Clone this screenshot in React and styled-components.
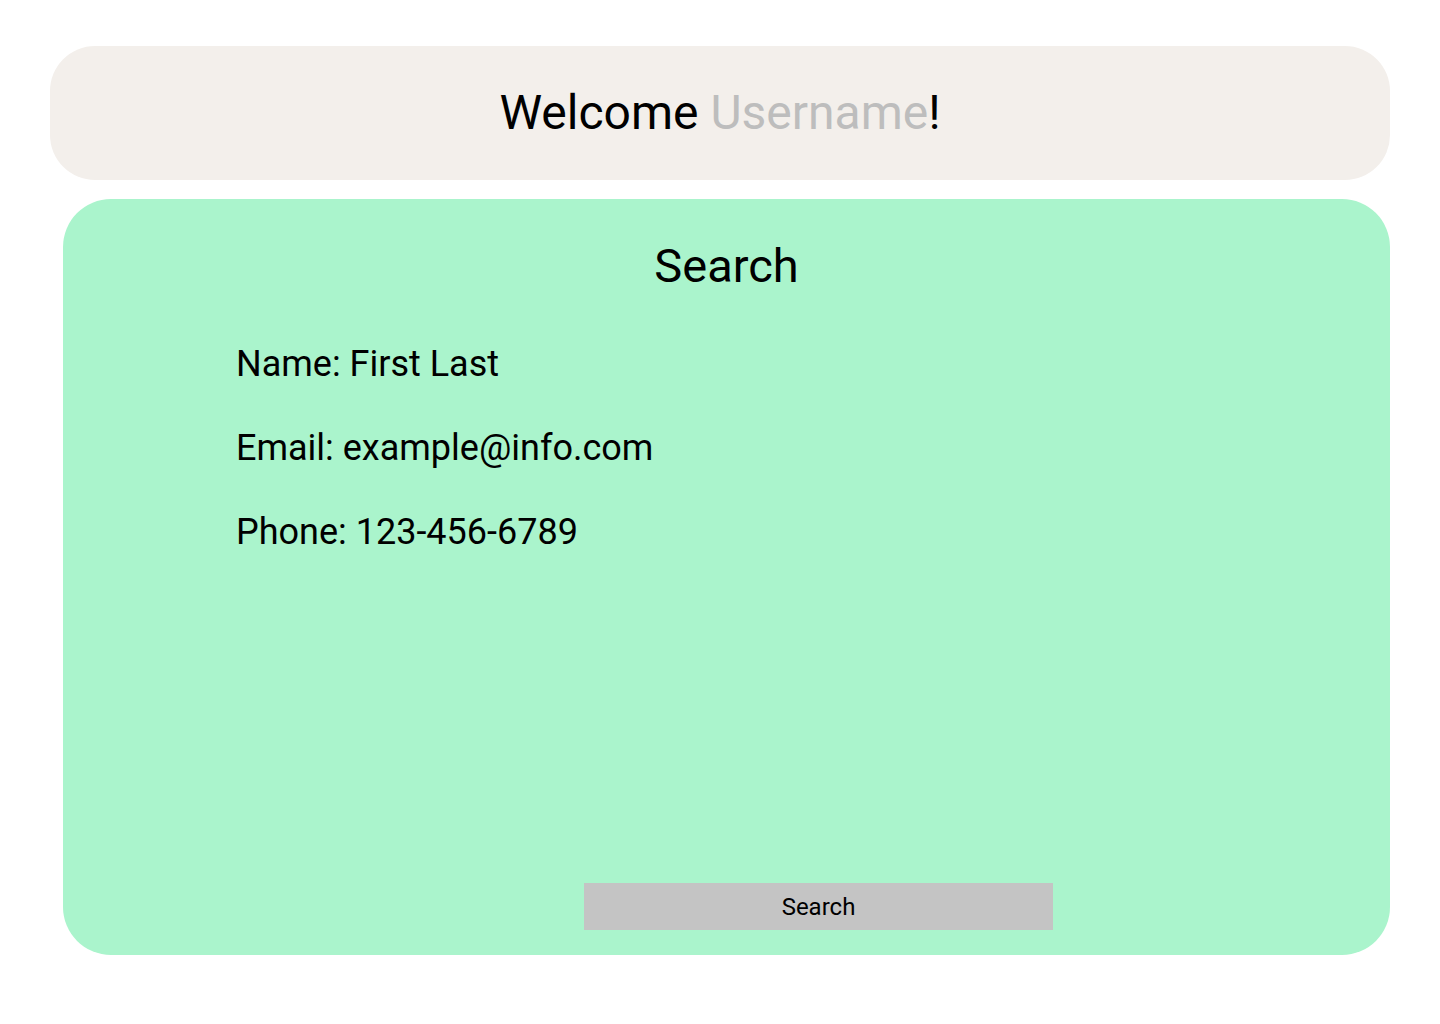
import React from "react";
import styled, { createGlobalStyle } from "styled-components";

const GlobalStyle = createGlobalStyle`
  body {
    margin: 0;
    background: #ffffff;
    font-family: Roboto, "Liberation Sans", sans-serif;
    color: #000000;
  }
`;

function App() {
  return (
    <>
      <GlobalStyle />
      <Page>
        <Header>
          <Greeting>
            Welcome <Muted>Username</Muted>!
          </Greeting>
        </Header>

        <Panel>
          <Title>Search</Title>
          <InfoList>
            <InfoLine>Name: First Last</InfoLine>
            <InfoLine>Email: example@info.com</InfoLine>
            <InfoLine>Phone: 123-456-6789</InfoLine>
          </InfoList>
          <SearchButton type="button">Search</SearchButton>
        </Panel>
      </Page>
    </>
  );
}

export default App;

const Page = styled.div`
  width: 1440px;
  height: 1024px;
  box-sizing: border-box;
  padding: 46px 50px 0 50px;
  display: flex;
  flex-direction: column;
`;

const Header = styled.header`
  height: 134px;
  border-radius: 45px;
  background-color: #f3efeb;
  display: flex;
  align-items: center;
  justify-content: center;
`;

const Greeting = styled.h1`
  margin: 0;
  font-size: 48px;
  font-weight: 400;
  line-height: 1;
`;

const Muted = styled.span`
  color: #bdbdbd;
`;

const Panel = styled.section`
  margin: 19px 0 0 13px;
  height: 756px;
  border-radius: 48px;
  background-color: #aaf4cc;
  display: flex;
  flex-direction: column;
  padding-top: 43px;
  box-sizing: border-box;
`;

const Title = styled.h2`
  margin: 0;
  text-align: center;
  font-size: 47px;
  font-weight: 400;
  line-height: 1;
`;

const InfoList = styled.div`
  margin-top: 33px;
  padding-left: 173px;
  display: flex;
  flex-direction: column;
`;

const InfoLine = styled.p`
  margin: 0;
  font-size: 36px;
  line-height: 84px;
`;

const SearchButton = styled.button`
  margin: auto 0 25px 521px;
  width: 469px;
  height: 47px;
  border: none;
  border-radius: 0;
  background-color: #c4c4c4;
  font-family: Roboto, "Liberation Sans", sans-serif;
  font-size: 24px;
  color: #000000;
  padding: 0;
  cursor: pointer;
`;
